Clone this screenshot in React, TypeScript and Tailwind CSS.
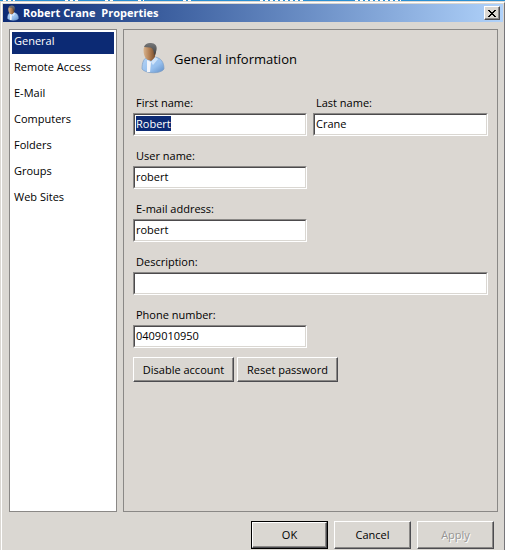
import { useEffect, useRef, useState } from "react";

const sections = ["General", "Remote Access", "E-Mail", "Computers", "Folders", "Groups", "Web Sites"];

function UserIcon({ className }: { className: string }) {
  return (
    <svg viewBox="0 0 24 32" className={className} aria-hidden="true">
      <defs>
        <linearGradient id="shirt" x1="0" y1="0" x2="1" y2="1">
          <stop offset="0" stopColor="#b4d4f6" />
          <stop offset="0.6" stopColor="#97c0ee" />
          <stop offset="1" stopColor="#5f8dc6" />
        </linearGradient>
        <linearGradient id="skin" x1="0" y1="0" x2="1" y2="0">
          <stop offset="0" stopColor="#d9b48e" />
          <stop offset="0.5" stopColor="#b07c50" />
          <stop offset="1" stopColor="#6b4629" />
        </linearGradient>
        <linearGradient id="hair" x1="0" y1="0" x2="0" y2="1">
          <stop offset="0" stopColor="#77787a" />
          <stop offset="1" stopColor="#3f4042" />
        </linearGradient>
      </defs>
      <path d="M1 27C1 20 3 16 7 15L14 15C20 16 23 20 23 27C20 32 5 32 1 27Z" fill="url(#shirt)" stroke="#7c9dc4" strokeWidth="0.7" />
      <path d="M7 14L14 13L14 16L10 19L6 17Z" fill="#94633d" />
      <path d="M6 18L10 20L9 30L6 30Z" fill="#f2f5fa" />
      <path d="M10 20L14 15L17 17L12 23Z" fill="#d0e4fa" />
      <path d="M2.500 8C2.500 4 6 2 9 2C13 2 15 5 15 9C15 14 12 18 8 18C5 18 2.500 14 2.500 8Z" fill="url(#skin)" />
      <path d="M3 5C4 2 7 0.500 10 1C14 1 16.500 4 15.500 8C15 10 14 13 13 13C13 9 12 6 9 5.500Z" fill="url(#hair)" />
    </svg>
  );
}

function Field({ id, label, value, className, select }: { id: string; label: string; value: string; className: string; select?: boolean }) {
  const ref = useRef<HTMLInputElement>(null);
  useEffect(() => {
    if (select) {
      ref.current?.focus();
      ref.current?.select();
    }
  }, [select]);
  return (
    <div className={className}>
      <label htmlFor={id} className="block h-5 pl-[3px] leading-5">{label}</label>
      <div className="border border-t-[#8a8886] border-l-[#8a8886] border-r-white border-b-white">
        <input
          ref={ref}
          id={id}
          defaultValue={value}
          className="block h-[21px] w-full border border-t-[#4c4a4c] border-l-[#4c4a4c] border-r-[#dad7d2] border-b-[#dad7d2] bg-white px-px pb-0.5 leading-4 outline-none selection:bg-[#0c2a74] selection:text-white"
        />
      </div>
    </div>
  );
}

const raised =
  "border border-t-white border-l-white border-r-[#4c4c50] border-b-[#4c4c50] shadow-[inset_-1px_-1px_0_#8a8886] bg-[#dad7d2] whitespace-nowrap";

export default function App() {
  const [active, setActive] = useState("General");
  return (
    <div className="flex min-h-screen flex-col bg-[#dad7d2] font-['Open_Sans','Noto_Sans',sans-serif] text-[11px] text-black">
      <div className="flex h-px bg-[#2b8fd2]">
        <svg className="h-px w-full" shapeRendering="crispEdges" aria-hidden="true">
          <path d="M3 .5h12M65 .5h14M105 .5h10M138 .5h6M183 .5h10M260 .5h44M355 .5h46" stroke="#fff" strokeDasharray="3 2" />
        </svg>
      </div>
      <div className="flex grow flex-col border-t border-l border-[#dad7d2]">
        <div className="flex grow flex-col border-t border-r border-l border-t-white border-r-[#77767a] border-l-white px-px pt-px">
          <header className="flex h-[18px] items-center bg-linear-to-r from-[#0c2a74] to-[#b0d2fa] pr-[3px] pl-[4px]">
            <UserIcon className="h-4 w-3" />
            <h1 className="ml-1 grow leading-[18px] font-bold whitespace-pre text-white">{"Robert Crane  Properties"}</h1>
            <button aria-label="Close" className={"flex h-[14px] w-4 items-center justify-center " + raised}>
              <svg viewBox="0 0 8 7" className="h-[7px] w-2" shapeRendering="crispEdges" aria-hidden="true">
                <path d="M0 0h2v1h1v1h2v-1h1v-1h2v1h-1v1h-1v1h-1v1h1v1h1v1h1v1h-2v-1h-1v-1h-2v1h-1v1h-2v-1h1v-1h1v-1h1v-1h-1v-1h-1v-1h-1z" fill="#000" />
              </svg>
            </button>
          </header>
          <div className="flex grow gap-[6px] pt-[7px] pr-[5px] pl-[6px]">
            <nav className="w-[108px] shrink-0 border border-[#8a8886] bg-white p-[2px]">
              <ul className="space-y-1">
                {sections.map((s) => (
                  <li key={s}>
                    <button
                      onClick={() => setActive(s)}
                      className={"block h-[22px] w-full pb-1 pl-[2px] text-left leading-[18px] " + (s === active ? "bg-[#0c2a74] text-white" : "")}
                    >
                      {s}
                    </button>
                  </li>
                ))}
              </ul>
            </nav>
            <main className="grow border border-[#8a8886] bg-[#dbd7d2] px-[9px] pt-[12px]">
              <div className="flex h-8 items-center gap-[9px] pl-[8px]">
                <UserIcon className="h-8 w-6" />
                <h2 className="pt-0.5 text-[13px] leading-5">General information</h2>
              </div>
              <div className="mt-[19px] flex gap-[6px]">
                <Field id="first" label="First name:" value="Robert" className="w-[174px]" select />
                <Field id="last" label="Last name:" value="Crane" className="grow" />
              </div>
              <div className="mt-[10px] space-y-[10px]">
                <Field id="user" label="User name:" value="robert" className="w-[174px]" />
                <Field id="email" label="E-mail address:" value="robert" className="w-[174px]" />
                <Field id="description" label="Description:" value="" className="w-full" />
                <Field id="phone" label="Phone number:" value="0409010950" className="w-[174px]" />
              </div>
              <div className="mt-[9px] flex gap-[3px]">
                <button className={"h-[25px] w-[101px] pt-0.5 " + raised}>Disable account</button>
                <button className={"h-[25px] w-[101px] pt-0.5 " + raised}>Reset password</button>
              </div>
            </main>
          </div>
          <footer className="flex shrink-0 justify-end gap-[6px] pt-[9px] pr-[9px] pb-px">
            <div className="border border-black">
              <button className={"block h-[26px] w-[75px] " + raised}>OK</button>
            </div>
            <button className={"h-7 w-[77px] " + raised}>Cancel</button>
            <button disabled className={"h-7 w-[77px] text-[#979594] [text-shadow:1px_1px_0_#fff] " + raised}>Apply</button>
          </footer>
        </div>
      </div>
    </div>
  );
}
